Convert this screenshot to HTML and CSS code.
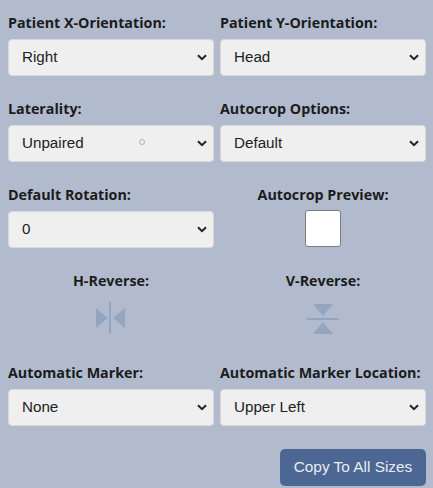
FILE: index.html
```html
<!DOCTYPE html>
<html lang="en">
<head>
    <meta charset="UTF-8">
    <title>Orientation Options</title>
    <link rel="stylesheet" href="styles.css">
</head>
<body>
    <div class="options-grid">
        <div class="field">
            <label class="field-label">Patient X-Orientation:</label>
            <select class="field-select"><option>Right</option></select>
        </div>
        <div class="field">
            <label class="field-label">Patient Y-Orientation:</label>
            <select class="field-select"><option>Head</option></select>
        </div>

        <div class="field">
            <label class="field-label">Laterality:</label>
            <select class="field-select"><option>Unpaired</option></select>
            <span class="cursor-dot"></span>
        </div>
        <div class="field">
            <label class="field-label">Autocrop Options:</label>
            <select class="field-select"><option>Default</option></select>
        </div>

        <div class="field">
            <label class="field-label">Default Rotation:</label>
            <select class="field-select"><option>0</option></select>
        </div>
        <div class="field field-center">
            <label class="field-label">Autocrop Preview:</label>
            <div class="preview-box"></div>
        </div>

        <div class="field field-center">
            <label class="field-label">H-Reverse:</label>
            <svg class="flip-icon flip-h" width="32" height="32" viewBox="0 0 32 32">
                <path d="M1 6L13 16 1 26Z M30 6L18 16 30 26Z" fill="#94a6bf"/>
                <rect x="14" y="0" width="2" height="32" fill="#94a6bf"/>
            </svg>
        </div>
        <div class="field field-center">
            <label class="field-label">V-Reverse:</label>
            <svg class="flip-icon flip-v" width="32" height="30" viewBox="0 0 32 30">
                <path d="M6 0H26L16 12Z M6 30H26L16 18Z" fill="#94a6bf"/>
                <rect x="0" y="14" width="32" height="2" fill="#94a6bf"/>
            </svg>
        </div>

        <div class="field">
            <label class="field-label">Automatic Marker:</label>
            <select class="field-select"><option>None</option></select>
        </div>
        <div class="field">
            <label class="field-label">Automatic Marker Location:</label>
            <select class="field-select"><option>Upper Left</option></select>
        </div>
    </div>

    <div class="actions">
        <button class="copy-button">Copy To All Sizes</button>
    </div>
</body>
</html>
```

FILE: styles.css
```css
html, body {
    height: 100%;
}
body {
    margin: 0;
    padding: 14px 7px 0 8px;
    box-sizing: border-box;
    overflow: hidden;
    background-color: #b2bbce;
    font-family: "Liberation Sans", Arial, sans-serif;
}
.options-grid {
    display: grid;
    grid-template-columns: 206px 206px;
    column-gap: 6px;
    grid-template-rows: 86px 86px 86px 92px auto;
}
.field {
    display: flex;
    flex-direction: column;
    align-items: stretch;
    position: relative;
}
.field-center {
    align-items: center;
}
.field-label {
    display: block;
    height: 25px;
    line-height: 17px;
    font-family: "Open Sans", sans-serif;
    font-size: 14.3px;
    font-weight: 700;
    color: #1b1b1b;
    white-space: nowrap;
}
.field-select {
    appearance: none;
    height: 37px;
    padding: 0 0 2px 13px;
    border: 1px solid #d9d9d9;
    border-radius: 4px;
    background-color: #efefef;
    background-image: url("data:image/svg+xml,%3Csvg xmlns='http://www.w3.org/2000/svg' width='10' height='7' viewBox='0 0 10 7'%3E%3Cpath d='M1 1.200L5 5.200 9 1.200' fill='none' stroke='%23222' stroke-width='2'/%3E%3C/svg%3E");
    background-repeat: no-repeat;
    background-position: right 6px center;
    font-family: "Liberation Sans", Arial, sans-serif;
    font-size: 15.2px;
    color: #222;
}
.cursor-dot {
    position: absolute;
    left: 131px;
    top: 39px;
    width: 6px;
    height: 6px;
    box-sizing: border-box;
    border: 1px solid #a9adc4;
    border-radius: 50%;
}
.preview-box {
    width: 36px;
    height: 37px;
    margin-top: -1px;
    box-sizing: border-box;
    border: 1px solid #7d7d7d;
    border-radius: 3px;
    background: white;
}
.flip-icon {
    display: block;
}
.flip-h {
    margin-top: 5px;
}
.flip-v {
    margin-top: 7px;
}
.actions {
    display: flex;
    justify-content: flex-end;
    margin-top: 23px;
}
.copy-button {
    width: 146px;
    height: 37px;
    padding: 0 0 2px;
    border: none;
    border-radius: 5px;
    background: #4c6793;
    color: #e8ecf2;
    font-family: "Liberation Sans", Arial, sans-serif;
    font-size: 15.4px;
}
```
